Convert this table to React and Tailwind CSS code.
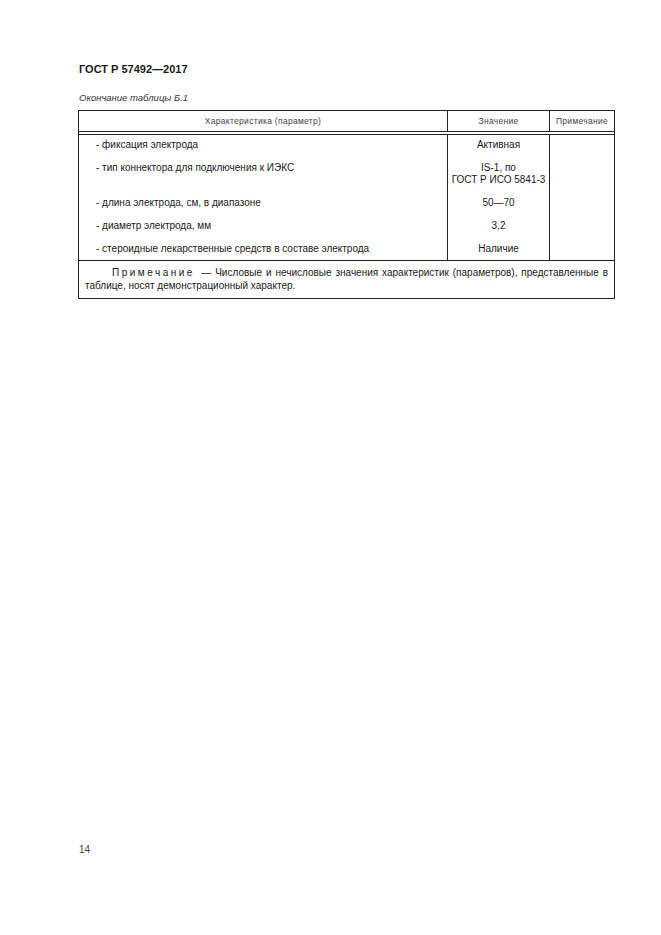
const rows = [
  { name: "- фиксация электрода", value: ["Активная"] },
  { name: "- тип коннектора для подключения к ИЭКС", value: ["IS-1, по", "ГОСТ Р ИСО 5841-3"] },
  { name: "- длина электрода, см, в диапазоне", value: ["50—70"] },
  { name: "- диаметр электрода, мм", value: ["3,2"] },
  { name: "- стероидные лекарственные средств в составе электрода", value: ["Наличие"] },
];

const App = () => {
  return (
    <div
      className="h-[935px] w-[661px] bg-white flex flex-col pl-[78px] pt-[62px] pb-[79px] text-[#1a1a1a]"
      style={{ fontFamily: '"Liberation Sans", Arial, sans-serif' }}
    >
      <h1 className="text-[11px] leading-[14px] font-bold pl-[1px]">ГОСТ Р 57492—2017</h1>
      <p className="mt-[16px] text-[9.5px] leading-[12px] italic text-[#333] pl-[1px]">Окончание таблицы Б.1</p>

      <div className="mt-[6px] w-[537px] border border-b-0 border-[#222]">
        {/* header */}
        <div className="flex h-[20px] items-center text-[8.5px] tracking-[0.3px] text-[#444]">
          <div className="w-[368px] text-center">Характеристика (параметр)</div>
          <div className="w-[102px] h-full flex items-center justify-center border-l border-[#222]">Значение</div>
          <div className="flex-1 h-full flex items-center justify-center border-l border-[#222]">Примечание</div>
        </div>
        <div className="h-[4px] border-t border-b border-[#222]" />

        {/* body */}
        <div className="text-[10px] leading-[12px]">
          {rows.map((r, i) => {
            let pad = "pt-[3px] pb-[8px]";
            if (i === 0) pad = "pt-[4px] pb-[8px]";
            if (i === rows.length - 1) pad = "pt-[3px] pb-[5px]";
            return (
              <div key={i} className="flex">
                <div className={`w-[368px] pl-[17px] ${pad}`}>{r.name}</div>
                <div className={`w-[102px] border-l border-[#222] text-center ${pad}`}>
                  {r.value.map((v, j) => (
                    <div key={j}>{v}</div>
                  ))}
                </div>
                <div className="flex-1 border-l border-[#222]" />
              </div>
            );
          })}
        </div>
      </div>

      {/* note */}
      <div className="w-[537px] border border-t-[1.5px] border-[#222] pl-[6px] pr-[6px] pt-[5px] pb-[6px] text-[10px] leading-[13px] text-justify indent-[27px]">
        <span className="tracking-[2.5px]">Примечание </span>— Числовые и нечисловые значения характеристик (параметров), представленные в таблице, носят демонстрационный характер.
      </div>

      <div className="mt-auto text-[10px] leading-[12px] text-[#444] pl-[1px]">14</div>
    </div>
  );
};

export default App;
